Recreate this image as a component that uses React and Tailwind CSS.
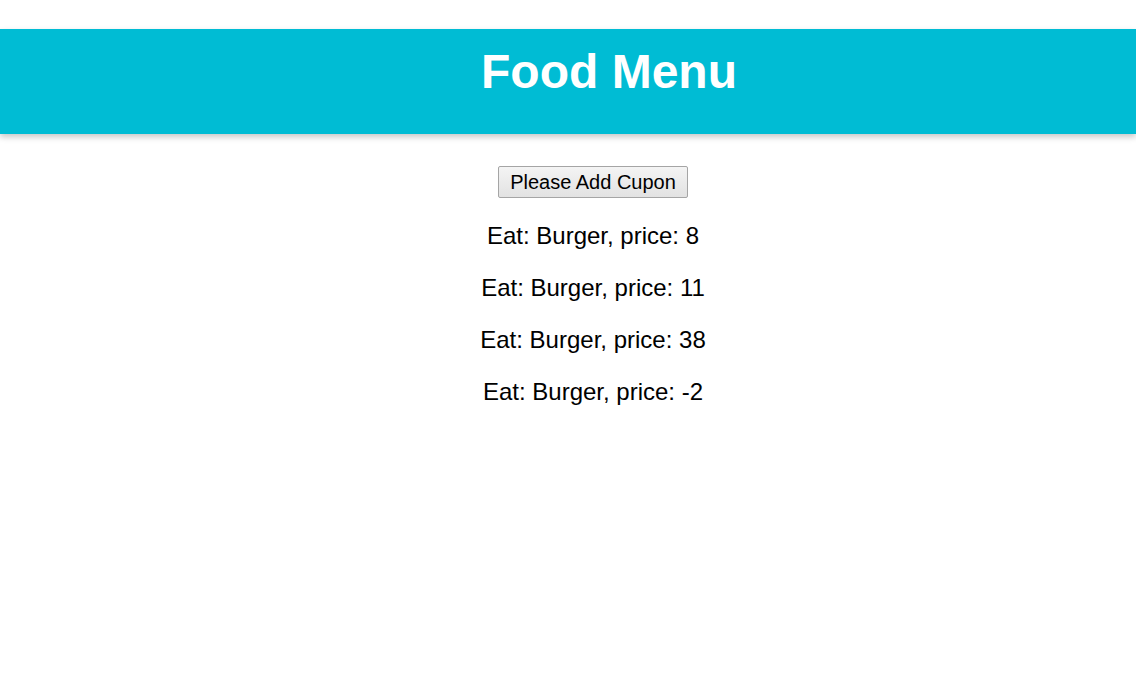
const foods = [
  { name: "Burger", price: 8 },
  { name: "Burger", price: 11 },
  { name: "Burger", price: 38 },
  { name: "Burger", price: -2 },
];

export default function App() {
  return (
    <div className="min-h-screen bg-white pt-[29px] font-['Liberation_Sans',Arial,sans-serif] text-black">
      {/* Header */}
      <header className="h-[105px] bg-[#00bcd4] pt-[16px] pl-[82px] text-center shadow-[0_3px_6px_rgba(0,0,0,0.22)]">
        <h1 className="text-[48px] font-bold leading-[54px] text-white">Food Menu</h1>
      </header>

      <main className="flex flex-col items-center pl-[50px] pt-[32px]">
        <button
          type="button"
          className="flex h-[32px] w-[190px] items-center justify-center rounded-[2px] border border-[#a5a5a5] bg-gradient-to-b from-[#f4f4f4] to-[#e2e2e2] text-[20px] leading-[23px] text-black"
        >
          Please Add Cupon
        </button>

        <div className="mt-6 flex flex-col items-center gap-6">
          {foods.map((food, i) => (
            <p key={i} className="text-[24px] leading-[28px]">
              Eat: {food.name}, price: {food.price}
            </p>
          ))}
        </div>
      </main>
    </div>
  );
}
